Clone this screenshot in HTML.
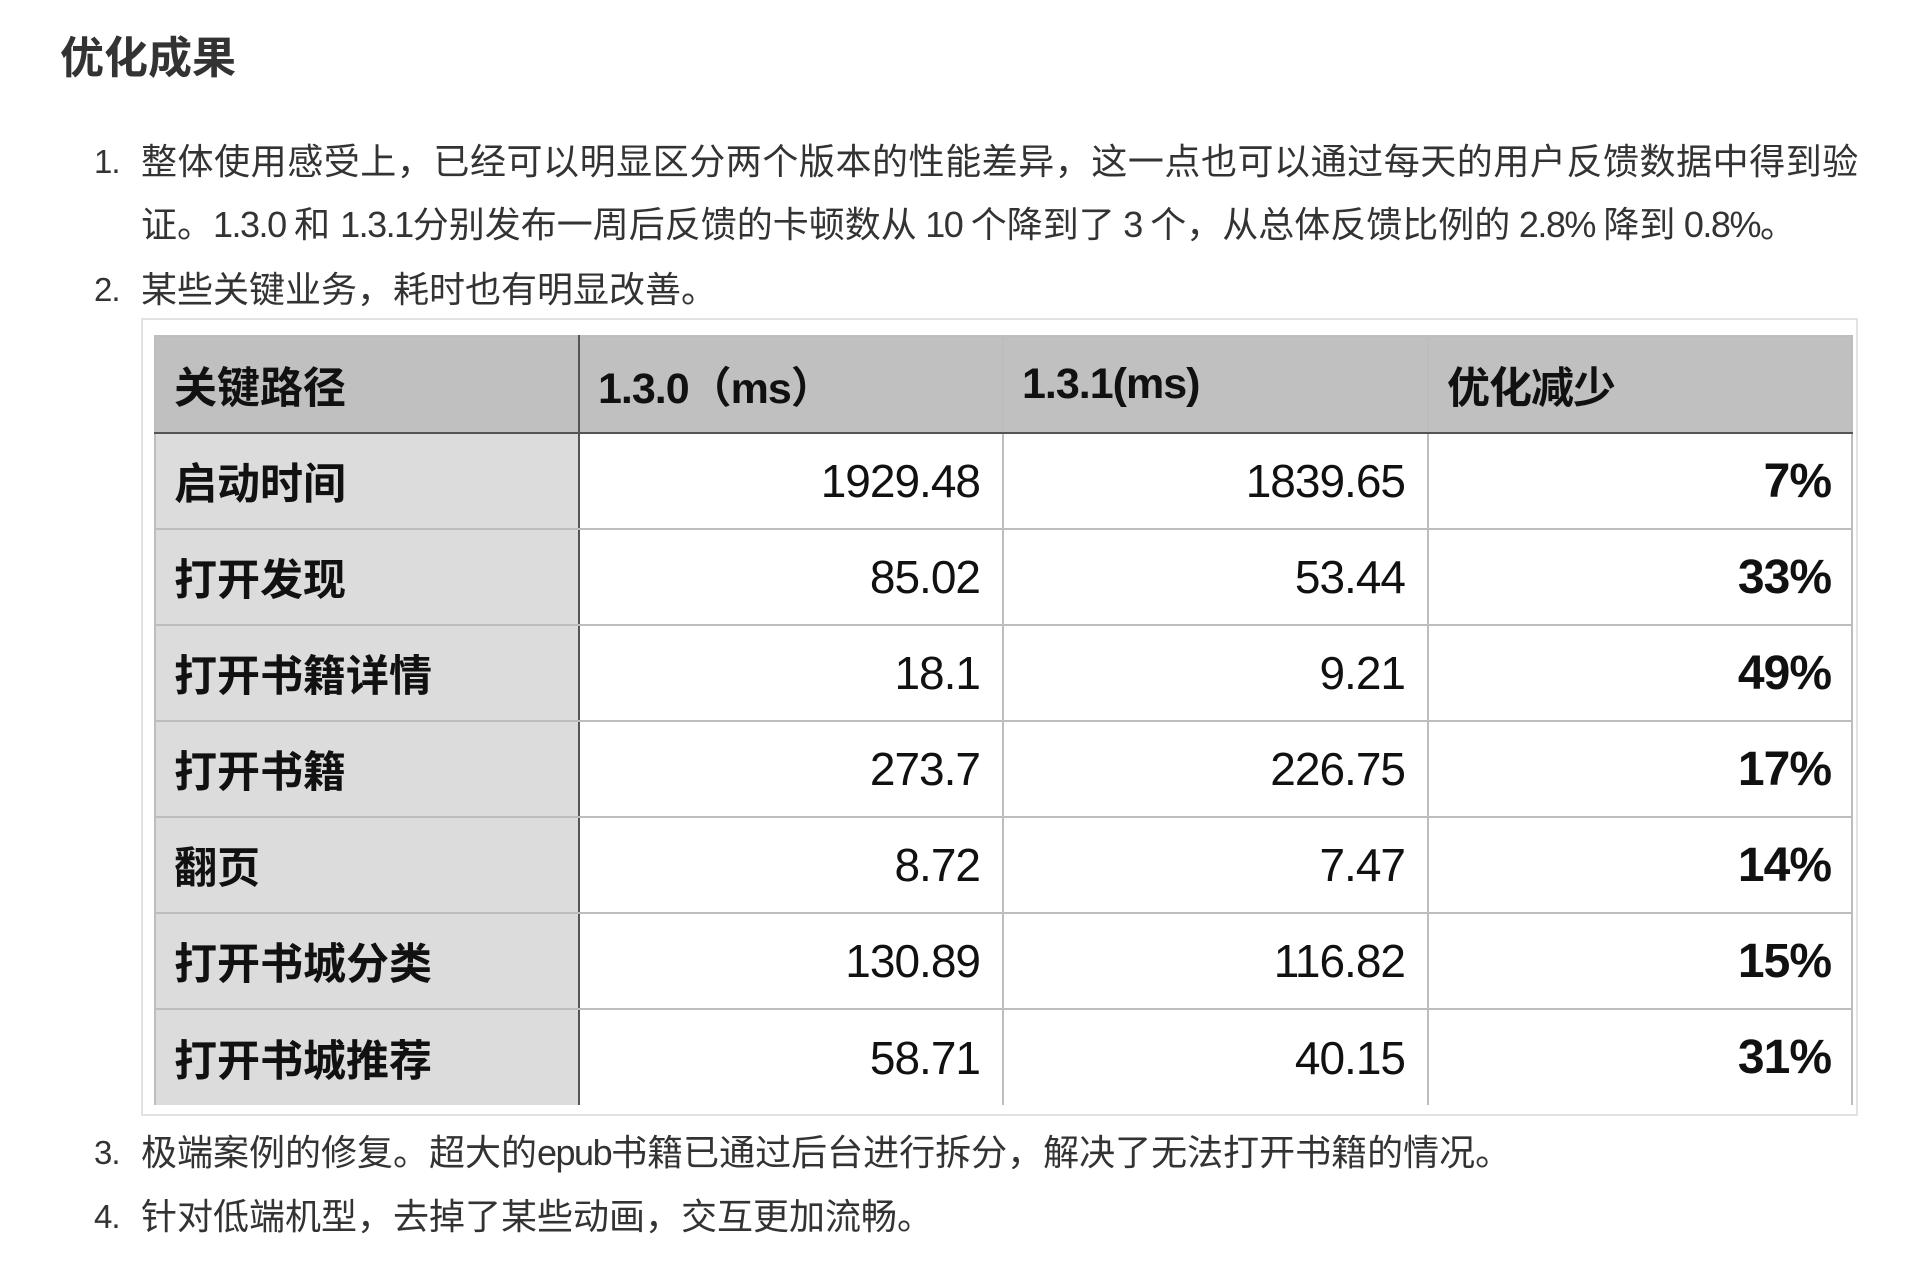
<!DOCTYPE html>
<html><head><meta charset="utf-8"><style>
html,body{margin:0;padding:0;background:#fff;width:1928px;height:1282px;overflow:hidden;position:relative}
body{font-family:"Liberation Sans","Noto Sans CJK SC",sans-serif;color:#333}
.h{position:absolute;left:60px;top:33px;font-size:44px;font-weight:bold;color:#333;line-height:52px}
.l{position:absolute;left:141px;font-size:36px;line-height:44px;white-space:nowrap;color:#333}
.l span{letter-spacing:-1.5px}
.n{position:absolute;left:94px;font-size:33px;line-height:44px;color:#333;letter-spacing:-1px}
.box{position:absolute;left:141px;top:318px;width:1713px;height:794px;border:2px solid #e2e2e2}
table{position:absolute;left:154px;top:335px;border-collapse:collapse;table-layout:fixed;width:1697px}
td{height:96px;border:2px solid #bdbdbd;font-size:46px;color:#111;padding:0 22px;box-sizing:border-box;text-align:right;letter-spacing:-1px}
tr td:first-child{background:#dcdcdc;text-align:left;font-weight:bold;font-size:43px;padding-left:18px;border-right:2px solid #555;letter-spacing:0}
tr.hd td{background:#c0c0c0;text-align:left;font-weight:bold;font-size:43px;height:97px;border-bottom:2px solid #555;padding-left:18px}
td.p{font-weight:bold;font-size:48px;padding-right:20px}
tr:last-child td{border-bottom:none}
</style></head><body>
<div class="h">优化成果</div>
<div class="n" style="top:140px">1.</div>
<div class="l" style="top:140px;letter-spacing:0.55px">整体使用感受上，已经可以明显区分两个版本的性能差异，这一点也可以通过每天的用户反馈数据中得到验</div>
<div class="l" style="top:203px">证。<span>1.3.0 </span>和 <span>1.3.1</span>分别发布一周后反馈的卡顿数从<span> 10 </span>个降到了<span> 3 </span>个，从总体反馈比例的<span> 2.8% </span>降到<span> 0.8%</span>。</div>
<div class="n" style="top:268px">2.</div>
<div class="l" style="top:268px">某些关键业务，耗时也有明显改善。</div>
<div class="box"></div>
<table>
<colgroup><col style="width:424px"><col style="width:424px"><col style="width:425px"><col style="width:424px"></colgroup>
<tr class="hd"><td>关键路径</td><td>1.3.0（ms）</td><td>1.3.1(ms)</td><td>优化减少</td></tr>
<tr><td>启动时间</td><td>1929.48</td><td>1839.65</td><td class="p">7%</td></tr>
<tr><td>打开发现</td><td>85.02</td><td>53.44</td><td class="p">33%</td></tr>
<tr><td>打开书籍详情</td><td>18.1</td><td>9.21</td><td class="p">49%</td></tr>
<tr><td>打开书籍</td><td>273.7</td><td>226.75</td><td class="p">17%</td></tr>
<tr><td>翻页</td><td>8.72</td><td>7.47</td><td class="p">14%</td></tr>
<tr><td>打开书城分类</td><td>130.89</td><td>116.82</td><td class="p">15%</td></tr>
<tr><td>打开书城推荐</td><td>58.71</td><td>40.15</td><td class="p">31%</td></tr>
</table>
<div class="n" style="top:1131px">3.</div>
<div class="l" style="top:1131px">极端案例的修复。超大的<span>epub</span>书籍已通过后台进行拆分，解决了无法打开书籍的情况。</div>
<div class="n" style="top:1195px">4.</div>
<div class="l" style="top:1195px">针对低端机型，去掉了某些动画，交互更加流畅。</div>
</body></html>
